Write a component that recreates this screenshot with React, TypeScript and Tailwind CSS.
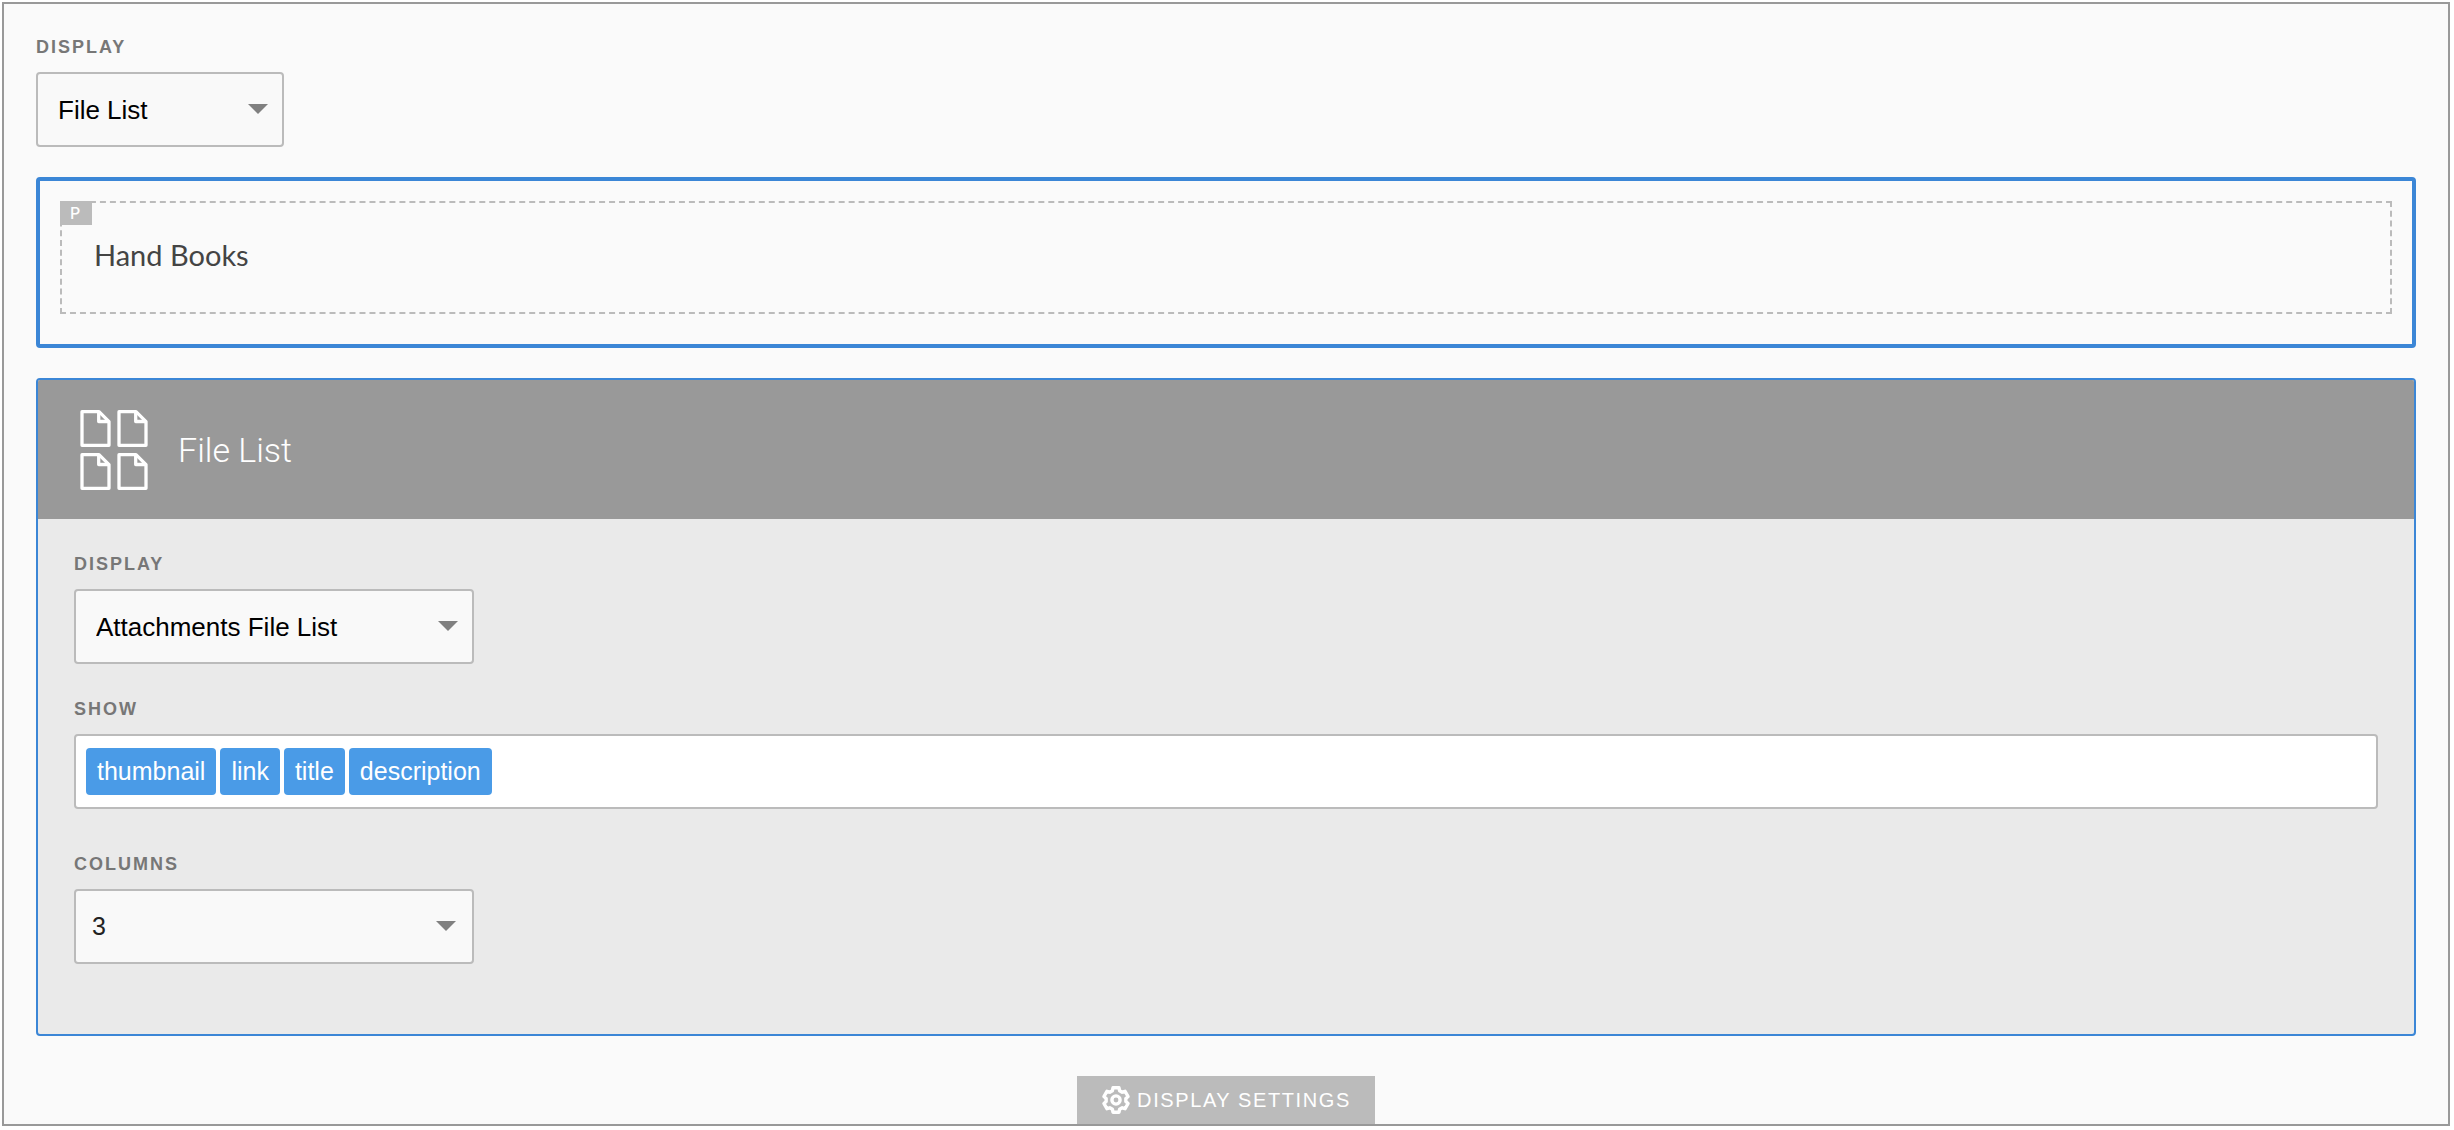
import React, { useState } from 'react';

const tags = ['thumbnail', 'link', 'title', 'description'];

const labelClass = 'block mb-3.5 text-[18px] leading-[22px] font-bold uppercase tracking-[2px] text-[#777]';

type SelectProps = {
    id: string;
    label: string;
    options: string[];
    className: string;
    arrowClass: string;
};

const SelectField: React.FC<SelectProps> = ({ id, label, options, className, arrowClass }) => {
    const [value, setValue] = useState(options[0]);

    return (
        <div>
            <label htmlFor={id} className={labelClass}>{label}</label>
            <div className='relative w-fit'>
                <select
                    id={id}
                    value={value}
                    onChange={(e) => setValue(e.target.value)}
                    className={`block h-[75px] appearance-none rounded border-2 border-[#bbb] bg-[#f9f9f9] ${className}`}
                >
                    {options.map((option) => <option key={option}>{option}</option>)}
                </select>
                <svg className={`pointer-events-none absolute top-8 h-2.5 w-5 fill-[#808080] ${arrowClass}`} viewBox='0 0 20 10'>
                    <path d='M0 0h20L10 10z' />
                </svg>
            </div>
        </div>
    );
};

// one page with a folded corner, repeated in a 2x2 grid
const FilesIcon: React.FC = () => (
    <svg width='68' height='80' viewBox='0 0 68 80' fill='none' stroke='white' strokeWidth='3.3' strokeLinejoin='round'>
        {[[0, 0], [37, 0], [0, 43], [37, 43]].map(([x, y]) => (
            <g key={`${x}-${y}`} transform={`translate(${x} ${y})`}>
                <path d='M2 1.7h17L29 11.7v23.6H2z' />
                <path d='M18.7 1.7v9.8H29' />
            </g>
        ))}
    </svg>
);

const GearIcon: React.FC = () => (
    <svg width='30' height='30' viewBox='-15 -15 30 30' fill='none' stroke='white' strokeWidth='3.4' strokeLinejoin='round'>
        <path d='M-3.6-9.3L-3-12.2H3L3.6-9.3L6.25-7.77L9.07-8.7L12.07-3.5L9.85-1.53V1.53L12.07 3.5L9.07 8.7L6.25 7.77L3.6 9.3L3 12.2H-3L-3.6 9.3L-6.25 7.77L-9.07 8.7L-12.07 3.5L-9.85 1.53V-1.53L-12.07-3.5L-9.07-8.7L-6.25-7.77Z' />
        <circle r='4.1' />
    </svg>
);

const App: React.FC = () => {
    return (
        <div className='bg-white pt-0.5 pl-0.5 pr-1 pb-1 font-["Liberation_Sans",Arial,sans-serif]'>
            <main className='flex flex-col border-2 border-[#999] bg-[#fafafa] px-8 pt-8'>
                <SelectField
                    id='display'
                    label='Display'
                    options={['File List', 'Gallery']}
                    className='w-[248px] pt-0.5 pl-5 text-[26px] text-black'
                    arrowClass='right-4'
                />

                <section className='mt-[30px] rounded border-4 border-[#3b86d6] px-5 pt-5 pb-[30px]'>
                    <div className='relative border-2 border-dashed border-[#bbb] pt-[34px] pb-[39px] pl-8'>
                        <span className='absolute -top-0.5 -left-0.5 h-6 w-8 bg-[#bbb] text-center font-[Inter,sans-serif] text-[16px] leading-6 font-medium tracking-widest text-white'>P</span>
                        <p className='font-[Lato,sans-serif] text-[29px] leading-9 text-[#444]'>Hand Books</p>
                    </div>
                </section>

                <section className='mt-[30px] overflow-hidden rounded border-2 border-[#3b86d6] bg-[#eaeaea]'>
                    <header className='flex h-[139px] items-center gap-[30px] bg-[#999] pl-[42px]'>
                        <FilesIcon />
                        <h2 className='font-[Roboto,sans-serif] text-[34px] leading-10 font-light text-white'>File List</h2>
                    </header>
                    <div className='px-9 pt-[34px] pb-[70px]'>
                        <SelectField
                            id='template'
                            label='Display'
                            options={['Attachments File List']}
                            className='w-[400px] pt-0.5 pl-5 text-[26px] text-black'
                            arrowClass='right-4'
                        />

                        <div className='mt-[34px]'>
                            <label htmlFor='show' className={labelClass}>Show</label>
                            <div className='flex h-[75px] items-center rounded border-2 border-[#bbb] bg-white px-2.5'>
                                <ul className='flex gap-1'>
                                    {tags.map((tag) => (
                                        <li key={tag} className='h-[47px] rounded bg-[#4a9be7] px-[11px] text-[25px] leading-[47px] text-white'>{tag}</li>
                                    ))}
                                </ul>
                                <input id='show' type='text' className='h-full min-w-0 flex-1 bg-transparent pl-2 text-[25px] outline-none' />
                            </div>
                        </div>

                        <div className='mt-11'>
                            <SelectField
                                id='columns'
                                label='Columns'
                                options={['3', '1', '2', '4']}
                                className='w-[400px] pl-4 text-[25px] text-[#222]'
                                arrowClass='right-[18px]'
                            />
                        </div>
                    </div>
                </section>

                <button type='button' className='mt-10 flex h-12 items-center gap-1.5 self-center bg-[#bbb] px-6 text-[20px] tracking-[0.08em] text-white uppercase'>
                    <GearIcon />
                    Display Settings
                </button>
            </main>
        </div>
    );
};

export default App;
